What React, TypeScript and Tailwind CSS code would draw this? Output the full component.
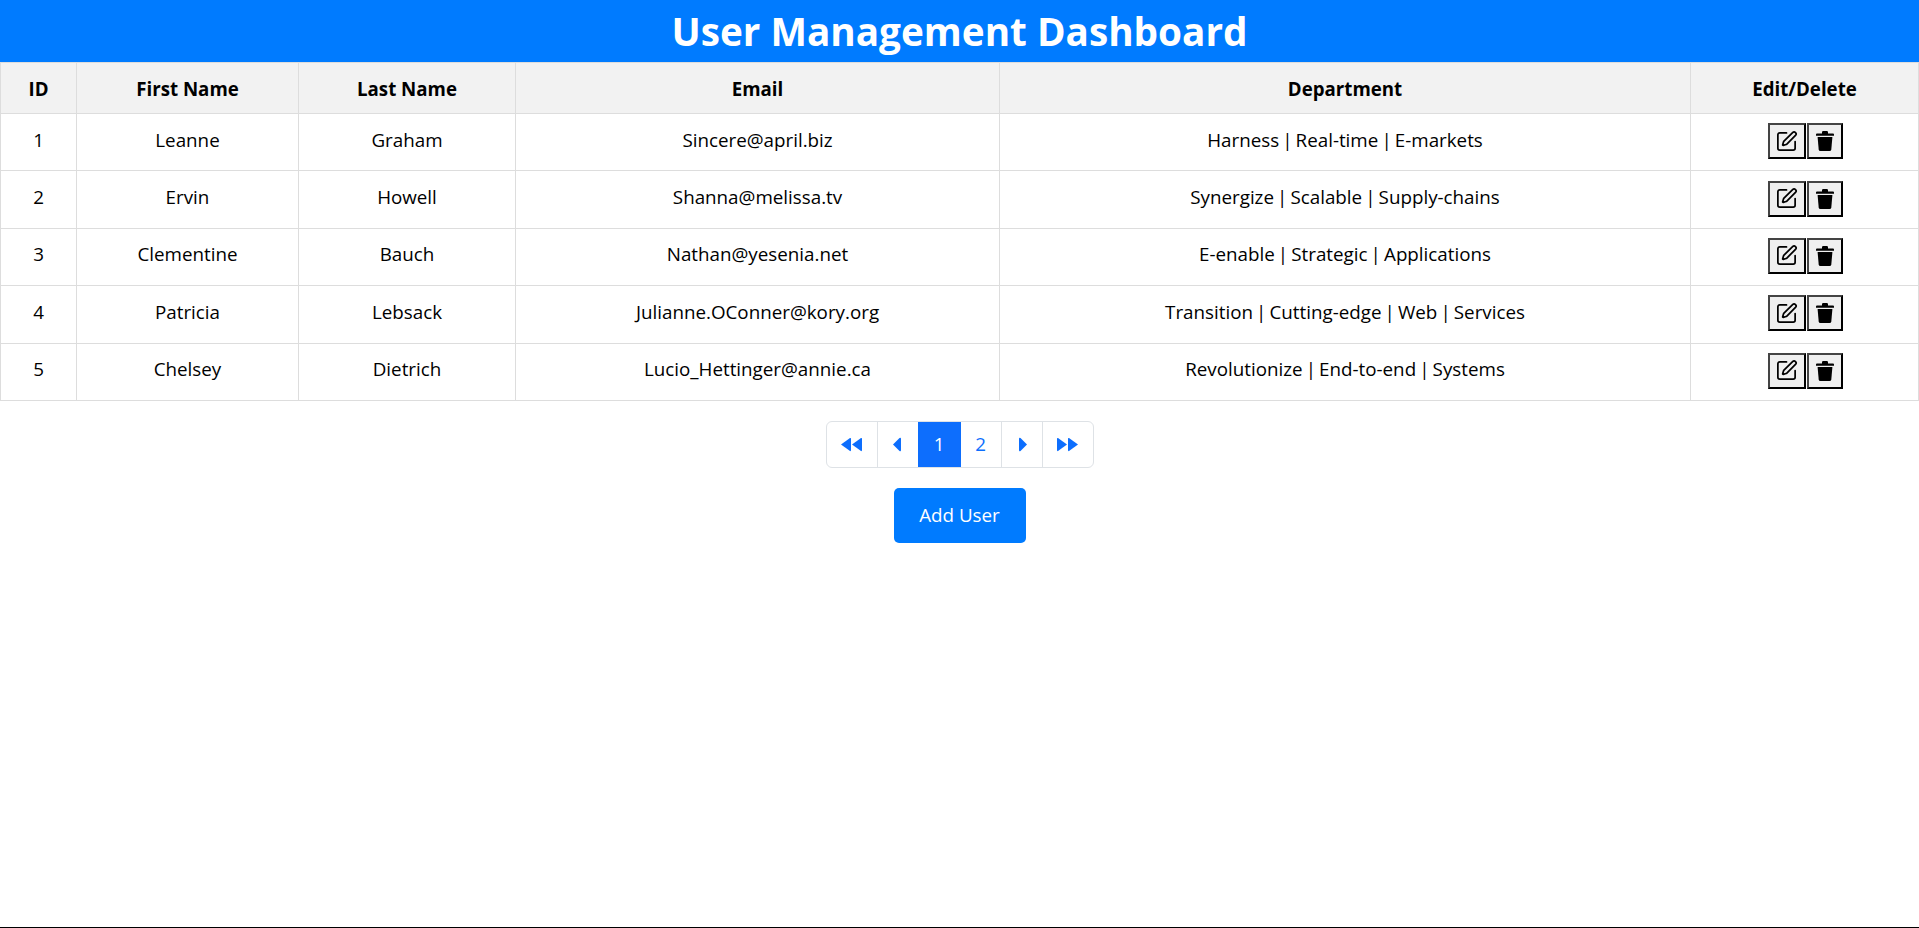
import { SquarePen } from 'lucide-react';

const users = [
    { id: 1, firstName: 'Leanne', lastName: 'Graham', email: 'Sincere@april.biz', department: 'Harness | Real-time | E-markets' },
    { id: 2, firstName: 'Ervin', lastName: 'Howell', email: 'Shanna@melissa.tv', department: 'Synergize | Scalable | Supply-chains' },
    { id: 3, firstName: 'Clementine', lastName: 'Bauch', email: 'Nathan@yesenia.net', department: 'E-enable | Strategic | Applications' },
    { id: 4, firstName: 'Patricia', lastName: 'Lebsack', email: 'Julianne.OConner@kory.org', department: 'Transition | Cutting-edge | Web | Services' },
    { id: 5, firstName: 'Chelsey', lastName: 'Dietrich', email: 'Lucio_Hettinger@annie.ca', department: 'Revolutionize | End-to-end | Systems' },
];

const headers = ['ID', 'First Name', 'Last Name', 'Email', 'Department', 'Edit/Delete'];
const thClass = 'border border-[#dddddd] bg-[#f2f2f2] h-[51px] p-0 pt-[2px] text-center text-[18.7px] font-bold text-black';
const tdClass = 'border border-[#dddddd] h-[57.4px] p-0 pb-[5px] text-center align-middle';
const actionClass = 'flex h-[36px] items-center justify-center border-2 border-black border-t-[#444444] border-l-[#444444] bg-[#efefef] text-black';

function Caret({ double, flip, className = '' }: { double?: boolean; flip?: boolean; className?: string }) {
    return (
        <svg width={double ? 21 : 8} height="15" viewBox={double ? '0 0 21 15' : '0 0 8 15'} fill="currentColor" className={`${flip ? 'rotate-180' : ''} ${className}`}>
            {double ? (
                <>
                    <path d="M0 7.5 L9 1 Q10 0.5 10 2 V13 Q10 14.5 9 14 Z" />
                    <path d="M11 7.5 L20 1 Q21 0.5 21 2 V13 Q21 14.5 20 14 Z" />
                </>
            ) : (
                <path d="M0 7.5 L6.5 1 Q8 0 8 2 V13 Q8 15 6.5 14 Z" />
            )}
        </svg>
    );
}

function TrashIcon() {
    return (
        <svg width="18" height="20" viewBox="0 0 18 20" fill="currentColor">
            <path d="M6 2.5 V1.2 Q6 0 7.2 0 H10.8 Q12 0 12 1.2 V2.5 H17 Q18 2.5 18 3.5 V4.8 H0 V3.5 Q0 2.5 1 2.5 Z" />
            <path d="M1.6 6 H16.4 L15.3 18.4 Q15.1 20 13.6 20 H4.4 Q2.9 20 2.7 18.4 Z" />
        </svg>
    );
}

function PageButton({ children, className = '' }: { children: React.ReactNode; className?: string }) {
    return <button className={`flex h-[45px] items-center justify-center ${className}`}>{children}</button>;
}

export default function App() {
    return (
        <div className="flex h-[928px] flex-col border-b border-black bg-white font-['Open_Sans','Noto_Sans',sans-serif] text-[18.8px] text-black">
            <h1 className="h-[62px] bg-[#007bff] text-center text-[38.7px] leading-[63px] font-bold text-white">
                User Management Dashboard
            </h1>

            <table className="w-full table-fixed border-collapse">
                <colgroup>
                    <col className="w-[76px]" />
                    <col className="w-[222px]" />
                    <col className="w-[217px]" />
                    <col className="w-[484px]" />
                    <col className="w-[691px]" />
                    <col />
                </colgroup>
                <thead>
                    <tr>
                        {headers.map((header) => (
                            <th key={header} className={thClass}>{header}</th>
                        ))}
                    </tr>
                </thead>
                <tbody>
                    {users.map((user) => (
                        <tr key={user.id}>
                            <td className={tdClass}>{user.id}</td>
                            <td className={tdClass}>{user.firstName}</td>
                            <td className={tdClass}>{user.lastName}</td>
                            <td className={tdClass}>{user.email}</td>
                            <td className={`${tdClass} [word-spacing:-1.8px]`}>{user.department}</td>
                            <td className="h-[57.4px] border border-[#dddddd] p-0 pb-[2px] align-middle">
                                <div className="flex justify-center gap-px pl-px">
                                    <button className={`${actionClass} w-[38px]`}>
                                        <SquarePen size={23} strokeWidth={1.8} />
                                    </button>
                                    <button className={`${actionClass} w-[36px]`}>
                                        <TrashIcon />
                                    </button>
                                </div>
                            </td>
                        </tr>
                    ))}
                </tbody>
            </table>

            <div className="mt-5 flex justify-center">
                <div className="flex overflow-hidden rounded-md border border-[#dee2e6] text-[#0d6efd]">
                    <PageButton className="w-[51px] border-r border-[#dee2e6]"><Caret double /></PageButton>
                    <PageButton className="w-[40px]"><Caret className="mr-[2px]" /></PageButton>
                    <PageButton className="w-[43px] bg-[#0d6efd] text-white">1</PageButton>
                    <PageButton className="w-[41px] border-r border-[#dee2e6]">2</PageButton>
                    <PageButton className="w-[41px] border-r border-[#dee2e6]"><Caret flip className="ml-[2px]" /></PageButton>
                    <PageButton className="w-[50px]"><Caret double flip /></PageButton>
                </div>
            </div>

            <div className="mt-5 flex justify-center">
                <button className="h-[55px] w-[132px] rounded-[5px] bg-[#007bff] text-white">Add User</button>
            </div>
        </div>
    );
}
